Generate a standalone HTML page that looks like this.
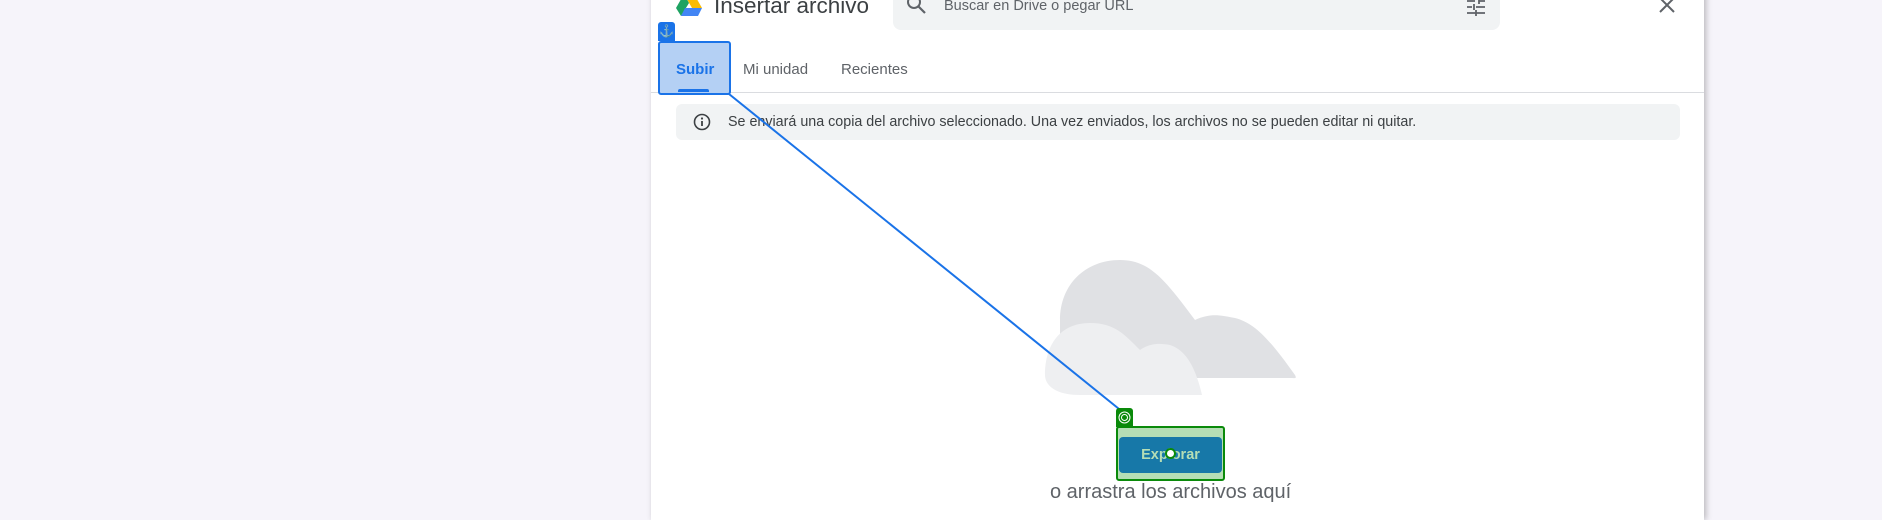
<!DOCTYPE html>
<html><head><meta charset="utf-8"><style>
body{margin:0;width:1882px;height:501px;background:#f6f4fa;position:relative;overflow:hidden;font-family:"Liberation Sans",Arial,sans-serif}
.dlg{position:absolute;left:651px;top:-10px;width:1053px;height:530px;background:#fff;box-shadow:2px 0 6px rgba(0,0,0,.25)}
.a{position:absolute;white-space:nowrap}
</style></head><body>
<div class="dlg"></div>
<svg class="a" style="left:676px;top:-6px" width="26" height="22" viewBox="0 0 26 22">
<path d="M8 0h10l8 14h-10z" fill="#fbbc04"/><path d="M8 0l5 9-8 13L0 14z" fill="#1ea362"/><path d="M5 22h17l4-8H9z" fill="#4285f4"/></svg>
<div class="a" style="left:714px;top:-7px;font-size:22.5px;color:#3c4043">Insertar archivo</div>
<div class="a" style="left:893px;top:-10px;width:607px;height:40px;background:#f1f3f4;border-radius:8px"></div>
<svg class="a" style="left:906px;top:-6px" width="22" height="22" viewBox="0 0 22 22"><circle cx="8" cy="8" r="6" fill="none" stroke="#5f6368" stroke-width="2"/><path d="M12.5 12.5L19 19" stroke="#5f6368" stroke-width="2.2"/></svg>
<div class="a" style="left:944px;top:-2px;font-size:14.5px;color:#5f6368">Buscar en Drive o pegar URL</div>
<svg class="a" style="left:1466px;top:-6px" width="20" height="22" viewBox="0 0 20 22"><path d="M1 7h8M13 7h6M1 13h5M10 13h9M1 19h18M13 4v6M8 10v6M10 16v6" stroke="#5f6368" stroke-width="1.8"/></svg>
<svg class="a" style="left:1658px;top:-4px" width="18" height="18" viewBox="0 0 18 18"><path d="M2 2L16 16M16 2L2 16" stroke="#5f6368" stroke-width="2"/></svg>
<div class="a" style="left:651px;top:92px;width:1053px;height:1px;background:#dadce0"></div>
<div class="a" style="left:743px;top:61px;font-size:15px;color:#5f6368">Mi unidad</div>
<div class="a" style="left:841px;top:61px;font-size:15px;color:#5f6368">Recientes</div>
<div class="a" style="left:658px;top:22px;width:17px;height:19px;background:#1a73e8;border-radius:3px 3px 0 0;color:#fff;font-size:12px;text-align:center;line-height:18px">⚓</div>
<div class="a" style="left:658px;top:41px;width:69px;height:50px;background:#b4d0f4;border:2px solid #1a73e8;border-radius:3px"></div>
<div class="a" style="left:676px;top:61px;font-size:15px;color:#1a73e8;font-weight:bold">Subir</div>
<div class="a" style="left:678px;top:89px;width:31px;height:3px;background:#1a73e8;border-radius:2px 2px 0 0"></div>
<div class="a" style="left:676px;top:104px;width:1004px;height:36px;background:#f1f3f4;border-radius:6px"></div>
<svg class="a" style="left:693px;top:113px" width="18" height="18" viewBox="0 0 18 18"><circle cx="9" cy="9" r="7.5" fill="none" stroke="#3c4043" stroke-width="1.6"/><path d="M9 8v5" stroke="#3c4043" stroke-width="1.8"/><circle cx="9" cy="5.5" r="1.1" fill="#3c4043"/></svg>
<div class="a" style="left:728px;top:114px;font-size:14.3px;color:#3c4043">Se enviará una copia del archivo seleccionado. Una vez enviados, los archivos no se pueden editar ni quitar.</div>
<svg class="a" style="left:1040px;top:255px" width="260" height="145" viewBox="0 0 260 145">
<path d="M20 123V65C20 30 45 5 80 5C110 5 125 25 155 65C170 58 180 60 195 63C215 68 230 85 255 120C257 124 255 123 250 123Z" fill="#e0e1e4"/>
<path d="M5 120C5 90 20 68 50 68C75 68 85 80 100 95C110 88 120 88 130 90C145 95 155 110 162 140H40C15 140 5 130 5 120Z" fill="#eeeff1"/>
</svg>
<svg class="a" style="left:0;top:0" width="1882" height="501"><path d="M729 94L1124 413" stroke="#1a73e8" stroke-width="2"/></svg>
<div class="a" style="left:1116px;top:408px;width:17px;height:19px;background:#0a8a0a;border-radius:3px 3px 0 0"></div>
<svg class="a" style="left:1118px;top:411px" width="13" height="13" viewBox="0 0 13 13"><circle cx="6.5" cy="6.5" r="5.5" fill="none" stroke="#fff" stroke-width="1"/><circle cx="6.5" cy="6.5" r="3" fill="none" stroke="#fff" stroke-width="1"/></svg>
<div class="a" style="left:1116px;top:426px;width:105px;height:51px;background:#b5deb5;border:2px solid #0a8a0a;border-radius:3px"></div>
<div class="a" style="left:1119px;top:437px;width:103px;height:36px;background:#1778a8;border-radius:4px;color:#b5deb5;font-size:14.5px;font-weight:bold;text-align:center;line-height:36px">Explorar</div>
<div class="a" style="left:1165px;top:448px;width:7px;height:7px;border:2px solid #0a8a0a;border-radius:50%;background:#fff"></div>
<div class="a" style="left:1050px;top:481px;font-size:20px;color:#5f6368">o arrastra los archivos aquí</div>
</body></html>
